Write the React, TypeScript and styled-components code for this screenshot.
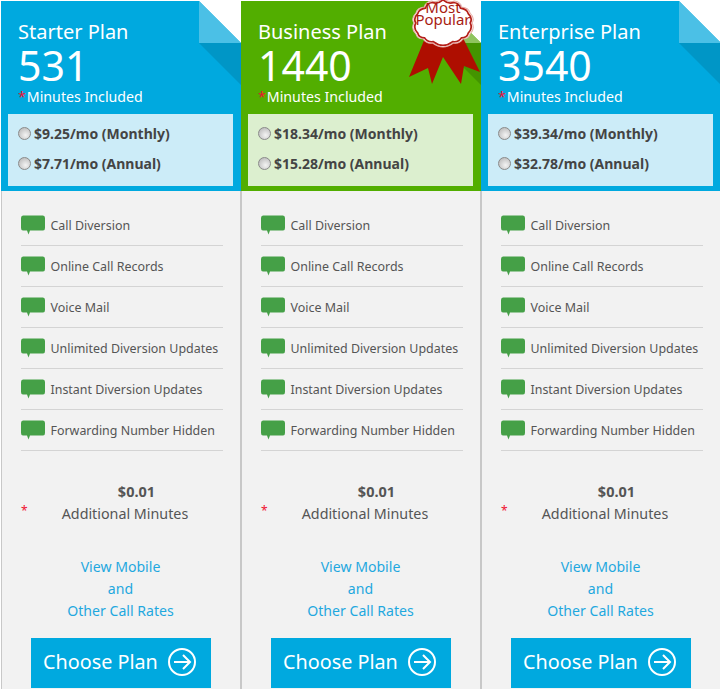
import React from "react";
import styled, { createGlobalStyle } from "styled-components";

const GlobalStyle = createGlobalStyle`
  html, body {
    margin: 0;
    padding: 0;
    background: #fff;
    font-family: "Noto Sans", "Open Sans", sans-serif;
  }
`;

const Plans = styled.div`
  display: grid;
  grid-template-columns: repeat(3, 240px);
  width: 720px;
  height: 689px;
  padding: 1px 0 0 1px;
  box-sizing: border-box;
  overflow: hidden;
`;

const Column = styled.div`
  display: flex;
  flex-direction: column;
  height: 688px;
`;

const Header = styled.div<{ $accent: string }>`
  position: relative;
  height: 190px;
  box-sizing: border-box;
  padding-top: 18px;
  background: ${(p) => p.$accent};
  color: #fff;
`;

const Fold = styled.svg`
  position: absolute;
  top: 0;
  right: 0;
`;

const Ribbon = styled.svg`
  position: absolute;
  top: -1px;
  right: 0;
`;

const Badge = styled.div`
  position: absolute;
  top: 1px;
  right: 7px;
  width: 62px;
  color: #a81c12;
  font-size: 15px;
  line-height: 11.5px;
  text-align: center;
`;

const PlanName = styled.div`
  margin-left: 17px;
  font-size: 20px;
  line-height: 26px;
`;

const Minutes = styled.div`
  margin: -1px 0 0 17px;
  font-size: 41px;
  line-height: 42px;
`;

const Included = styled.div`
  margin: 1px 0 0 17px;
  font-size: 14.2px;
  line-height: 20px;
`;

const Star = styled.span`
  margin-right: 1px;
  color: #f01030;
`;

const PriceBox = styled.div<{ $tint: string }>`
  display: flex;
  flex-direction: column;
  gap: 8px;
  margin: 7px 8px 0 7px;
  height: 72px;
  box-sizing: border-box;
  padding: 8px 0 0 10px;
  background: ${(p) => p.$tint};
  color: #444;
  font-size: 14px;
  font-weight: 700;
`;

const PriceRow = styled.label`
  display: flex;
  align-items: center;
  gap: 3px;
  height: 22px;
`;

const Radio = styled.input`
  appearance: none;
  width: 13px;
  height: 13px;
  margin: 0;
  border: 1px solid #8a8a8a;
  border-radius: 50%;
  background: radial-gradient(circle at 60% 65%, #f4f4f4 0%, #cfcfcf 55%, #b0b0b0 100%);
`;

const Body = styled.div`
  flex: 1;
  display: flex;
  flex-direction: column;
  align-items: center;
  border-left: 1px solid #c8c8c8;
  border-right: 1px solid #c8c8c8;
  background: #f2f2f2;
  color: #555;
`;

const Features = styled.ul`
  width: 202px;
  margin: 14px 0 0 1px;
  padding: 0;
  list-style: none;
`;

const Feature = styled.li`
  display: flex;
  align-items: center;
  gap: 6px;
  height: 40px;
  border-bottom: 1px solid #d4d4d4;
  font-size: 12.45px;
  white-space: nowrap;
`;

const Extra = styled.div`
  position: relative;
  width: 202px;
  margin-top: 30px;
  padding-left: 8px;
  box-sizing: border-box;
  text-align: center;
  font-size: 14.3px;
  line-height: 22px;
`;

const ExtraPrice = styled.div`
  margin: -1px 0 1px 23px;
  font-size: 14.5px;
  font-weight: 700;
`;

const ExtraStar = styled.span`
  position: absolute;
  left: 1px;
  top: 19px;
  color: #f01030;
  font-size: 12px;
  line-height: 22px;
`;

const Rates = styled.a`
  margin: 31px 1px 0 0;
  color: #1fa8df;
  text-align: center;
  font-size: 14.1px;
  line-height: 22px;
`;

const Choose = styled.button`
  display: flex;
  align-items: center;
  justify-content: space-between;
  width: 180px;
  height: 50px;
  margin-top: 16px;
  padding: 0 14px 3px 12px;
  box-sizing: border-box;
  border: 0;
  background: #00a9df;
  color: #fff;
  font-family: inherit;
  font-size: 19.8px;
`;

const BubbleIcon = () => (
  <svg width="24" height="20" viewBox="0 0 24 20">
    <path
      d="M2 0.5 H22 Q24 0.5 24 3 V13 Q24 15.5 22 15.5 H9 L7.5 19.5 L6 15.5 H2 Q0 15.5 0 13 V3 Q0 0.5 2 0.5 Z"
      fill="#45a047"
    />
  </svg>
);

const ArrowIcon = () => (
  <svg width="30" height="30" viewBox="0 0 30 30" fill="none" stroke="#fff" strokeWidth="2">
    <circle cx="15" cy="15" r="13" />
    <path d="M7 15 H23 M16 8 L23 15 L16 22" />
  </svg>
);

const features = [
  "Call Diversion",
  "Online Call Records",
  "Voice Mail",
  "Unlimited Diversion Updates",
  "Instant Diversion Updates",
  "Forwarding Number Hidden",
];

const plans = [
  { name: "Starter Plan", minutes: "531", monthly: "$9.25", annual: "$7.71", accent: "#00a9df", tint: "#ccecf8", light: "#4bc0e6", dark: "#0096c6", popular: false },
  { name: "Business Plan", minutes: "1440", monthly: "$18.34", annual: "$15.28", accent: "#52ae00", tint: "#dcefcf", light: "#8fc45f", dark: "#439400", popular: true },
  { name: "Enterprise Plan", minutes: "3540", monthly: "$39.34", annual: "$32.78", accent: "#00a9df", tint: "#ccecf8", light: "#4bc0e6", dark: "#0096c6", popular: false },
];

const seal =
  "M33 -2 Q38 3 44 1 Q50 2 51 7 Q58 8 59 13 Q64 18 61 23 Q64 29 59 34 Q58 39 52 39 Q49 44 43 43 Q38 47 33 47 Q28 47 23 43 Q17 44 14 39 Q8 39 7 34 Q2 29 5 23 Q2 18 7 13 Q8 8 15 7 Q16 2 22 1 Q28 3 33 -2 Z";

export default function App() {
  return (
    <>
      <GlobalStyle />
      <Plans>
        {plans.map((plan) => (
          <Column key={plan.name}>
            <Header $accent={plan.accent}>
              <Fold width="42" height="85" viewBox="0 0 42 85">
                <path d="M0 0 H42 V42 Z" fill="#fff" />
                <path d="M0 0 L42 42 H0 Z" fill={plan.light} />
                <path d="M0 42 H42 V84 Z" fill={plan.dark} />
              </Fold>
              {plan.popular && (
                <>
                  <Ribbon width="72" height="86" viewBox="0 0 72 86">
                    <path d="M16 38 L0 77 L19 68 L23 84 L34 57 L52 84 L55 66 L71 72 L54 38 Z" fill="#ae0e00" />
                    <path d={seal} transform="translate(34 22.5) scale(1.04 1) translate(-33 -22.5)" fill="#fff" stroke="#e8b0aa" strokeWidth="1" />
                    <path d={seal} transform="translate(34 22.5) scale(0.97 0.93) translate(-33 -22.5)" fill="#fff" stroke="#b5201a" strokeWidth="1.8" />
                  </Ribbon>
                  <Badge>Most<br />Popular</Badge>
                </>
              )}
              <PlanName>{plan.name}</PlanName>
              <Minutes>{plan.minutes}</Minutes>
              <Included><Star>*</Star>Minutes Included</Included>
              <PriceBox $tint={plan.tint}>
                <PriceRow><Radio type="radio" name={plan.name} />{plan.monthly}/mo (Monthly)</PriceRow>
                <PriceRow><Radio type="radio" name={plan.name} />{plan.annual}/mo (Annual)</PriceRow>
              </PriceBox>
            </Header>
            <Body>
              <Features>
                {features.map((f) => (
                  <Feature key={f}><BubbleIcon />{f}</Feature>
                ))}
              </Features>
              <Extra>
                <ExtraStar>*</ExtraStar>
                <ExtraPrice>$0.01</ExtraPrice>
                Additional Minutes
              </Extra>
              <Rates>View Mobile<br />and<br />Other Call Rates</Rates>
              <Choose>Choose Plan <ArrowIcon /></Choose>
            </Body>
          </Column>
        ))}
      </Plans>
    </>
  );
}
